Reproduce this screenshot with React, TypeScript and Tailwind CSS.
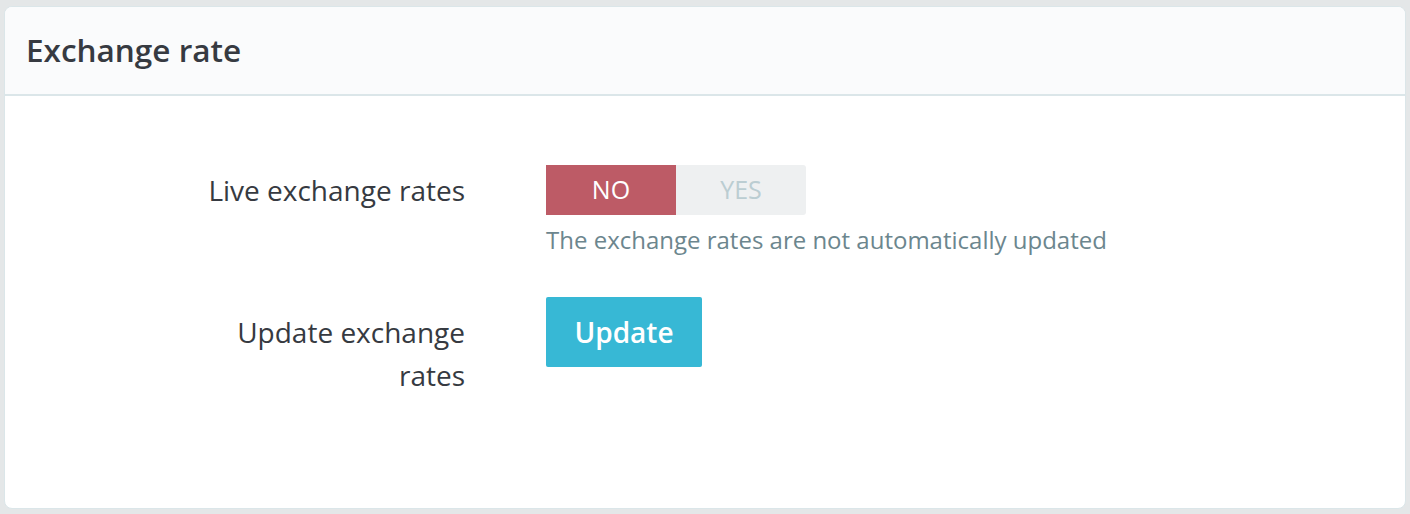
export default function App() {
  return (
    <div className="min-h-[514px] w-[1410px] bg-[#e4e7e8] px-[4px] pt-[6px] pb-[5px] font-['Open_Sans',sans-serif]">
      <div className="h-[503px] rounded-[8px] border border-[#dbe6e9] bg-white overflow-hidden">
        <div className="h-[89px] border-b-2 border-[#dbe6e9] bg-[#fafbfc] px-[21px] flex items-center">
          <h2 className="text-[31.5px] font-semibold text-[#363a41] leading-none pb-[2px]">Exchange rate</h2>
        </div>
        <div className="pt-[69px]">
          <div className="grid grid-cols-[460px_1fr] gap-x-[81px]">
            <div className="flex h-[50px] items-center justify-end text-[28px] text-[#363a41]">
              Live exchange rates
            </div>
            <div>
              <div className="flex h-[50px] w-[260px]">
                <span className="flex w-[130px] items-center justify-center bg-[#bd5b66] text-[25px] text-white">NO</span>
                <span className="flex w-[130px] items-center justify-center rounded-r-[3px] bg-[#eef0f1] text-[25px] text-[#bbcdd2]">YES</span>
              </div>
              <p className="mt-[9px] text-[24px] leading-[32px] text-[#6c868e]">
                The exchange rates are not automatically updated
              </p>
            </div>

            <div className="mt-[41px] pt-[14px] text-right text-[28px] leading-[43px] text-[#363a41]">
              Update exchange
              <br />
              rates
            </div>
            <div className="mt-[41px]">
              <button className="h-[70px] w-[156px] rounded-[2px] bg-[#37b8d5] text-[28px] font-semibold text-white">
                Update
              </button>
            </div>
          </div>
        </div>
      </div>
    </div>
  )
}
